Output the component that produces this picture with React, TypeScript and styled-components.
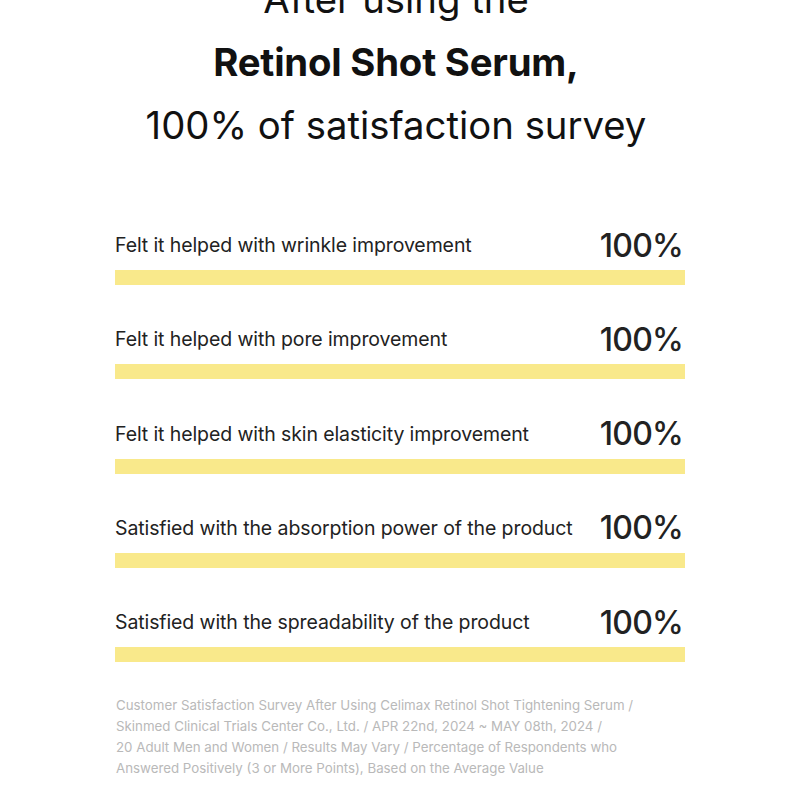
import React from "react";
import styled, { createGlobalStyle } from "styled-components";

const GlobalStyle = createGlobalStyle`
  html, body {
    margin: 0;
    padding: 0;
    background: #ffffff;
    font-family: Inter, "Noto Sans", sans-serif;
    color: #111111;
  }
`;

const Page = styled.main`
  width: 800px;
  height: 800px;
  overflow: hidden;
`;

const Heading = styled.h1`
  margin: -32px 0 0;
  padding-right: 8px;
  text-align: center;
  font-size: 38.3px;
  line-height: 63px;
  font-weight: 400;
  letter-spacing: 0;
  color: #111;
`;

const Strong = styled.strong`
  font-weight: 700;
  letter-spacing: -0.2px;
`;

const List = styled.section`
  width: 570px;
  margin: 69px auto 0;
  display: flex;
  flex-direction: column;
  gap: 35.3px;
`;

const Item = styled.div`
  display: flex;
  flex-direction: column;
  gap: 6px;
`;

const Row = styled.div`
  display: flex;
  justify-content: space-between;
  align-items: center;
  height: 38px;
`;

const Label = styled.span`
  font-size: 19.5px;
  color: #222;
  letter-spacing: -0.1px;
`;

const Percent = styled.span`
  font-size: 32px;
  font-weight: 500;
  color: #222;
  letter-spacing: -0.8px;
  padding-right: 2px;
`;

const Bar = styled.div`
  height: 15px;
  background: #f9e98b;
`;

const Note = styled.p`
  width: 570px;
  margin: 33px auto 0;
  padding-left: 2px;
  font-size: 13.3px;
  line-height: 21px;
  color: #b9b9b9;
`;

const items = [
  "Felt it helped with wrinkle improvement",
  "Felt it helped with pore improvement",
  "Felt it helped with skin elasticity improvement",
  "Satisfied with the absorption power of the product",
  "Satisfied with the spreadability of the product",
];

export default function App() {
  return (
    <Page>
      <GlobalStyle />
      <Heading>
        After using the
        <br />
        <Strong>Retinol Shot Serum,</Strong>
        <br />
        100% of satisfaction survey
      </Heading>
      <List>
        {items.map((text) => (
          <Item key={text}>
            <Row>
              <Label>{text}</Label>
              <Percent>100%</Percent>
            </Row>
            <Bar />
          </Item>
        ))}
      </List>
      <Note>
        Customer Satisfaction Survey After Using Celimax Retinol Shot Tightening Serum /
        <br />
        Skinmed Clinical Trials Center Co., Ltd. / APR 22nd, 2024 ~ MAY 08th, 2024 /
        <br />
        20 Adult Men and Women / Results May Vary / Percentage of Respondents who
        <br />
        Answered Positively (3 or More Points), Based on the Average Value
      </Note>
    </Page>
  );
}
